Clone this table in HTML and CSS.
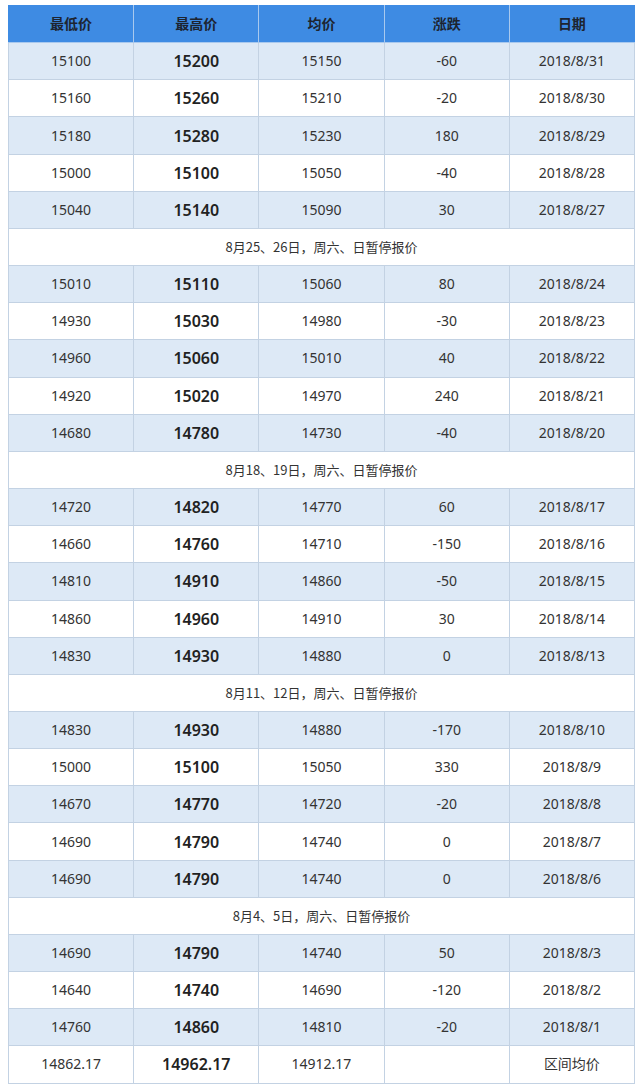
FILE: index.html
```html
<!DOCTYPE html>
<html>
<head>
<meta charset="utf-8">
<link rel="stylesheet" href="styles.css">
</head>
<body>
<table class="price">
<thead>
<tr><th>最低价</th><th>最高价</th><th>均价</th><th>涨跌</th><th>日期</th></tr>
</thead>
<tbody>
<tr class="alt"><td>15100</td><td class="hi">15200</td><td>15150</td><td>-60</td><td>2018/8/31</td></tr>
<tr><td>15160</td><td class="hi">15260</td><td>15210</td><td>-20</td><td>2018/8/30</td></tr>
<tr class="alt"><td>15180</td><td class="hi">15280</td><td>15230</td><td>180</td><td>2018/8/29</td></tr>
<tr><td>15000</td><td class="hi">15100</td><td>15050</td><td>-40</td><td>2018/8/28</td></tr>
<tr class="alt"><td>15040</td><td class="hi">15140</td><td>15090</td><td>30</td><td>2018/8/27</td></tr>
<tr><td colspan="5" class="note">8月25、26日，周六、日暂停报价</td></tr>
<tr class="alt"><td>15010</td><td class="hi">15110</td><td>15060</td><td>80</td><td>2018/8/24</td></tr>
<tr><td>14930</td><td class="hi">15030</td><td>14980</td><td>-30</td><td>2018/8/23</td></tr>
<tr class="alt"><td>14960</td><td class="hi">15060</td><td>15010</td><td>40</td><td>2018/8/22</td></tr>
<tr><td>14920</td><td class="hi">15020</td><td>14970</td><td>240</td><td>2018/8/21</td></tr>
<tr class="alt"><td>14680</td><td class="hi">14780</td><td>14730</td><td>-40</td><td>2018/8/20</td></tr>
<tr><td colspan="5" class="note">8月18、19日，周六、日暂停报价</td></tr>
<tr class="alt"><td>14720</td><td class="hi">14820</td><td>14770</td><td>60</td><td>2018/8/17</td></tr>
<tr><td>14660</td><td class="hi">14760</td><td>14710</td><td>-150</td><td>2018/8/16</td></tr>
<tr class="alt"><td>14810</td><td class="hi">14910</td><td>14860</td><td>-50</td><td>2018/8/15</td></tr>
<tr><td>14860</td><td class="hi">14960</td><td>14910</td><td>30</td><td>2018/8/14</td></tr>
<tr class="alt"><td>14830</td><td class="hi">14930</td><td>14880</td><td>0</td><td>2018/8/13</td></tr>
<tr><td colspan="5" class="note">8月11、12日，周六、日暂停报价</td></tr>
<tr class="alt"><td>14830</td><td class="hi">14930</td><td>14880</td><td>-170</td><td>2018/8/10</td></tr>
<tr><td>15000</td><td class="hi">15100</td><td>15050</td><td>330</td><td>2018/8/9</td></tr>
<tr class="alt"><td>14670</td><td class="hi">14770</td><td>14720</td><td>-20</td><td>2018/8/8</td></tr>
<tr><td>14690</td><td class="hi">14790</td><td>14740</td><td>0</td><td>2018/8/7</td></tr>
<tr class="alt"><td>14690</td><td class="hi">14790</td><td>14740</td><td>0</td><td>2018/8/6</td></tr>
<tr><td colspan="5" class="note">8月4、5日，周六、日暂停报价</td></tr>
<tr class="alt"><td>14690</td><td class="hi">14790</td><td>14740</td><td>50</td><td>2018/8/3</td></tr>
<tr><td>14640</td><td class="hi">14740</td><td>14690</td><td>-120</td><td>2018/8/2</td></tr>
<tr class="alt"><td>14760</td><td class="hi">14860</td><td>14810</td><td>-20</td><td>2018/8/1</td></tr>
<tr><td>14862.17</td><td class="hi">14962.17</td><td>14912.17</td><td></td><td>区间均价</td></tr>
</tbody>
</table>
</body>
</html>
```
FILE: styles.css
```css
html, body {
  margin: 0;
  padding: 0;
  background: #ffffff;
}
body {
  padding: 5px 6px 0 8px;
  font-family: "Noto Sans", "Noto Sans CJK SC", sans-serif;
  color: #333333;
}
.price {
  width: 627px;
  border-collapse: collapse;
  table-layout: fixed;
}
.price th,
.price td {
  height: 36.17px;
  padding: 0;
  text-align: center;
  vertical-align: middle;
  border: 1px solid #c3d2e3;
  font-size: 14px;
  line-height: 18px;
}
.price th {
  background: #3e8be3;
  color: #1d2430;
  font-weight: 600;
  font-size: 14px;
  border-color: #a9c9ee;
  border-top-color: #3e8be3;
}
.price th:first-child { border-left-color: #3e8be3; }
.price th:last-child { border-right-color: #3e8be3; }
.price tr.alt td {
  background: #dde9f6;
}
.price td.hi {
  font-size: 16px;
  font-weight: 600;
  color: #222222;
}
.price td.note {
  font-family: "Noto Sans CJK SC", sans-serif;
  font-size: 13px;
}
```
